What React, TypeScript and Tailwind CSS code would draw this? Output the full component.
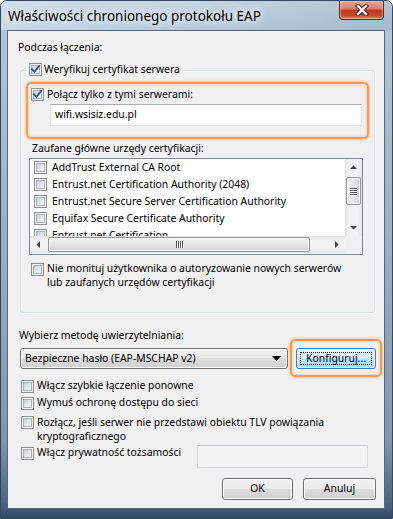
import React from "react";

function Checkbox({ checked = false }: { checked?: boolean }) {
  return (
    <span className="relative block w-[13px] h-[13px] shrink-0 border border-[#8e8f8f] bg-[#f4f4f4]">
      <span className="absolute left-[1px] top-[1px] w-[9px] h-[9px] border border-[#aeb2b8] bg-[linear-gradient(135deg,#c9cdd3,#eceef0_70%,#f7f7f7)]" />
      {checked && (
        <svg className="absolute left-0 top-0" width="11" height="11" viewBox="0 0 11 11">
          <path d="M2 5.3 L4.4 7.8 L9.2 2" fill="none" stroke="#2f4b9c" strokeWidth="1.9" strokeLinecap="square" />
        </svg>
      )}
    </span>
  );
}

function Arrow({ dir }: { dir: "up" | "down" | "left" | "right" }) {
  const pts: Record<string, string> = {
    up: "0,5 3.5,1.5 7,5",
    down: "0,2 3.5,5.5 7,2",
    left: "5,0 1.5,3.5 5,7",
    right: "2,0 5.5,3.5 2,7",
  };
  return (
    <div className="w-[17px] h-[17px] flex items-center justify-center shrink-0">
      <svg width="7" height="7" viewBox="0 0 7 7">
        <polygon points={pts[dir]} fill="#3f3f3f" />
      </svg>
    </div>
  );
}

function VScroll() {
  return (
    <div className="w-[17px] h-[77px] flex flex-col bg-[linear-gradient(90deg,#e3e3e3,#f3f3f3_25%,#f3f3f3_75%,#e3e3e3)]">
      <Arrow dir="up" />
      <div className="flex-1 flex flex-col px-[1px]">
        <div className="mt-[1px] h-[28px] rounded-[2px] border border-[#959595] bg-[linear-gradient(90deg,#f4f4f4,#e4e4e4_50%,#d2d2d2)] shadow-[inset_0_0_0_1px_#fbfbfb] flex flex-col items-center justify-center gap-[1px]">
          {[0, 1, 2, 3].map((i) => (
            <div key={i} className="w-[7px] h-[1px] bg-[#5a5a5a] shadow-[0_1px_0_#ffffff]" />
          ))}
        </div>
      </div>
      <Arrow dir="down" />
    </div>
  );
}

function HScroll() {
  return (
    <div className="flex-1 h-[17px] flex bg-[linear-gradient(180deg,#e3e3e3,#f3f3f3_25%,#f3f3f3_75%,#e3e3e3)]">
      <Arrow dir="left" />
      <div className="flex-1 flex py-[1px]">
        <div className="ml-[1px] w-[262px] rounded-[2px] border border-[#959595] bg-[linear-gradient(180deg,#f4f4f4,#e4e4e4_50%,#d2d2d2)] shadow-[inset_0_0_0_1px_#fbfbfb] flex items-center justify-center gap-[1px]">
          {[0, 1, 2, 3].map((i) => (
            <div key={i} className="w-[1px] h-[7px] bg-[#5a5a5a] shadow-[1px_0_0_#ffffff]" />
          ))}
        </div>
      </div>
      <Arrow dir="right" />
    </div>
  );
}

const btn =
  "flex items-center justify-center rounded-[3px] border border-[#707070] bg-[linear-gradient(180deg,#f2f2f2,#ebebeb_50%,#dddddd_50%,#cfcfcf)] shadow-[inset_0_0_0_1px_#fcfcfc]";

const orange =
  "rounded-[5px] border-[2px] border-[#f8995a] shadow-[0_0_2px_1px_#fcc6a0,inset_0_0_2px_1px_#fdd6ba]";

export default function App() {
  const certs = [
    "AddTrust External CA Root",
    "Entrust.net Certification Authority (2048)",
    "Entrust.net Secure Server Certification Authority",
    "Equifax Secure Certificate Authority",
    "Entrust.net Certification",
  ];
  return (
    <div className="relative w-[393px] h-[519px] overflow-hidden rounded-t-[7px] border border-[#34475c] bg-[linear-gradient(180deg,#c8d6e4_0%,#b2c4d7_6%,#9db0c4_45%,#8196ab_85%,#4c6580_97%,#344b66_100%)] font-['Noto_Sans',sans-serif] text-[10.4px] text-black">
      {/* title bar */}
      <div className="h-[29px] flex items-center pl-[7px] bg-[linear-gradient(90deg,rgba(214,226,238,0.6),rgba(180,198,216,0.2)_60%,rgba(120,145,170,0.25))]">
        <span className="text-[13.5px] leading-[18px] [text-shadow:0_0_6px_#ffffff,0_0_10px_rgba(255,255,255,0.8)]">
          Właściwości chronionego protokołu EAP
        </span>
      </div>
      <div className="absolute top-0 right-[8px] w-[45px] h-[19px] rounded-b-[4px] border border-t-0 border-[#5e2a22] bg-[linear-gradient(180deg,#e9a896,#d77d66_45%,#c4381c_50%,#c9482a_80%,#e08a5e)] shadow-[inset_0_0_0_1px_rgba(255,220,200,0.45)] flex items-center justify-center">
        <svg width="14" height="12" viewBox="0 0 14 12">
          <path d="M3 2 L11 10 M11 2 L3 10" stroke="#4a2018" strokeWidth="4.4" strokeLinecap="square" />
          <path d="M3 2 L11 10 M11 2 L3 10" stroke="#ffffff" strokeWidth="2.4" strokeLinecap="square" />
        </svg>
      </div>

      {/* client area */}
      <div className="ml-[6px] w-[378px] h-[479px] border border-[#56667a] bg-[#f0f0f0] flex flex-col">
        <div className="ml-[10px] mt-[8px] leading-[16px]">Podczas łączenia:</div>

        {/* group box */}
        <div className="relative ml-[12px] mt-[15px] w-[355px] h-[243px] shrink-0 rounded-[3px] border border-[#d5dfe5] shadow-[inset_1px_1px_0_#ffffff,1px_1px_0_#ffffff] flex flex-col">
          <div className="absolute left-[6px] top-[-8px] pl-[2px] pr-[3px] h-[13px] flex items-center gap-[2px] bg-[#f0f0f0] leading-[13px]">
            <Checkbox checked />
            <span>Weryfikuj certyfikat serwera</span>
          </div>

          <div className={"ml-[5px] mt-[11px] w-[343px] h-[57px] shrink-0 flex flex-col " + orange}>
            <div className="ml-[3px] mt-[4px] h-[13px] flex items-center gap-[3px] leading-[13px]">
              <Checkbox checked />
              <span>Połącz tylko z tymi serwerami:</span>
            </div>
            <div className="ml-[22px] mt-[3px] w-[312px] h-[22px] border border-[#e2e3ea] border-t-[#abadb3] bg-white pl-[4px] flex items-center">
              wifi.wsisiz.edu.pl
            </div>
          </div>

          <div className="ml-[11px] mt-[1px] leading-[16px]">Zaufane główne urzędy certyfikacji:</div>

          <div className="ml-[8px] mt-[2px] w-[334px] h-[97px] shrink-0 border border-[#828790] bg-white flex flex-col">
            <div className="flex h-[77px]">
              <div className="flex-1 overflow-hidden">
                {certs.map((c) => (
                  <div key={c} className="h-[17px] flex items-center pl-[4px] gap-[5px] leading-[17px] whitespace-nowrap">
                    <Checkbox />
                    <span>{c}</span>
                  </div>
                ))}
              </div>
              <VScroll />
            </div>
            <div className="flex h-[17px]">
              <HScroll />
              <div className="w-[17px] bg-[#f0f0f0]" />
            </div>
          </div>

          <div className="ml-[10px] mt-[6px] flex items-start gap-[3px] leading-[14px]">
            <div className="mt-[2px]">
              <Checkbox />
            </div>
            <div>
              Nie monituj użytkownika o autoryzowanie nowych serwerów
              <br />
              lub zaufanych urzędów certyfikacji
            </div>
          </div>
        </div>

        <div className="ml-[11px] mt-[14px] leading-[16px]">Wybierz metodę uwierzytelniania:</div>

        <div className="ml-[12px] mt-[5px] flex gap-[8px] h-[21px]">
          <div className={btn + " w-[268px] h-[21px] !justify-between pl-[4px] pr-[6px]"}>
            <span>Bezpieczne hasło (EAP-MSCHAP v2)</span>
            <svg width="9" height="5" viewBox="0 0 9 5">
              <polygon points="0,0 9,0 4.5,5" fill="#000" />
            </svg>
          </div>
          <div className="relative">
            <div className="w-[80px] h-[21px] rounded-[3px] border border-[#3c7fb1] bg-[linear-gradient(180deg,#eaf6fd,#d9f0fc_50%,#bee6fd_50%,#a7d9f5)] shadow-[inset_0_0_0_1px_#f6fbfe] p-[3px]">
              <div className="w-full h-full border border-dotted border-[#222] flex items-center justify-center leading-[13px]">
                Konfiguruj...
              </div>
            </div>
            <div className={"absolute left-[-6px] top-[-9px] right-[-6px] bottom-[-8px] pointer-events-none " + orange} />
          </div>
        </div>

        <div className="ml-[13px] mt-[9px] flex items-start gap-[3px] leading-[15px]">
          <div className="mt-[2px]"><Checkbox /></div>
          <span>Włącz szybkie łączenie ponowne</span>
        </div>
        <div className="ml-[13px] mt-[2px] flex items-start gap-[3px] leading-[15px]">
          <div className="mt-[2px]"><Checkbox /></div>
          <span>Wymuś ochronę dostępu do sieci</span>
        </div>
        <div className="ml-[13px] mt-[5px] flex items-start gap-[3px] leading-[14px]">
          <div className="mt-[1px]"><Checkbox /></div>
          <div>
            Rozłącz, jeśli serwer nie przedstawi obiektu TLV powiązania
            <br />
            kryptograficznego
          </div>
        </div>
        <div className="ml-[13px] mr-[16px] mt-[2px] flex items-start justify-between leading-[15px]">
          <div className="flex items-start gap-[3px]">
            <div className="mt-[2px]"><Checkbox /></div>
            <span>Włącz prywatność tożsamości</span>
          </div>
          <div className="w-[171px] h-[23px] border border-[#d9dbe0] border-t-[#c2c4ca] bg-[#f4f4f4]" />
        </div>

        <div className="mt-[10px] mr-[8px] flex justify-end gap-[10px]">
          <div className={btn + " w-[71px] h-[22px]"}>OK</div>
          <div className={btn + " w-[73px] h-[22px]"}>Anuluj</div>
        </div>
      </div>
    </div>
  );
}
